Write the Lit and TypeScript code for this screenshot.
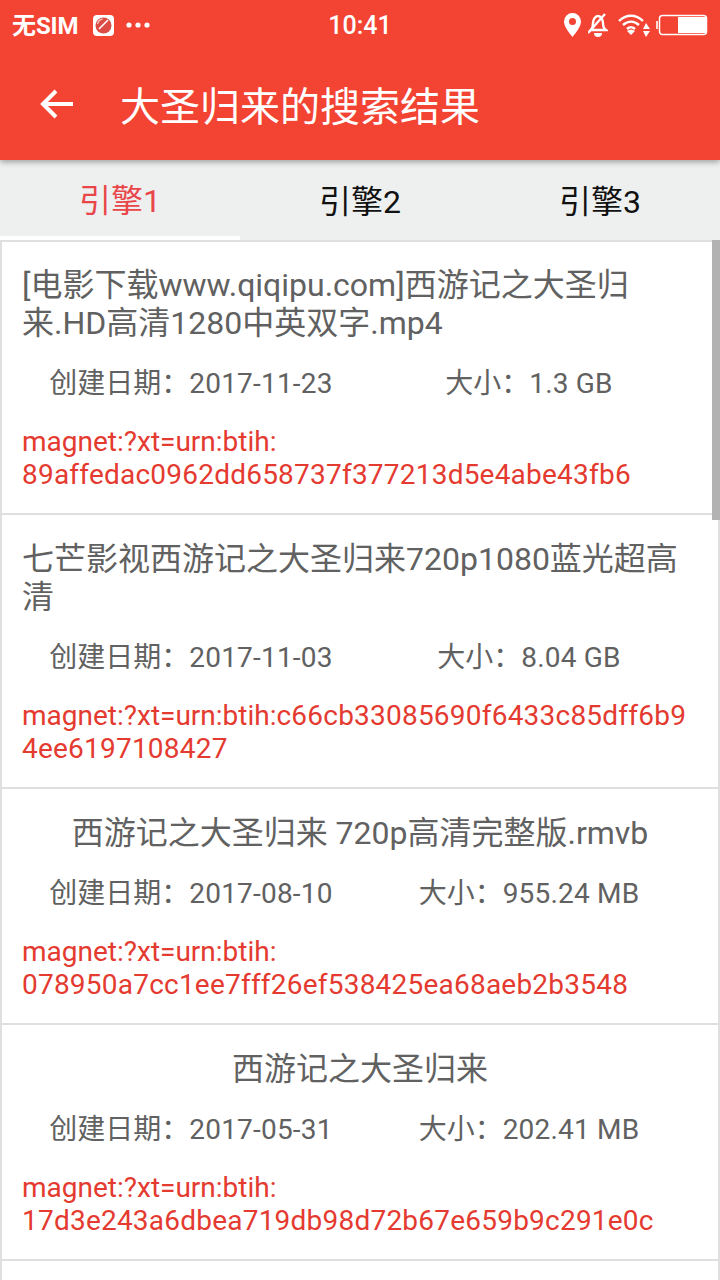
import { LitElement, html, css } from "lit";
import { customElement } from "lit/decorators.js";

const items = [
  { t: ["[电影下载www.qiqipu.com]西游记之大圣归", "来.HD高清1280中英双字.mp4"], d: "2017-11-23", s: "1.3 GB", h: ["89affedac0962dd658737f377213d5e4abe43fb6"], br: true },
  { t: ["七芒影视西游记之大圣归来720p1080蓝光超高", "清"], d: "2017-11-03", s: "8.04 GB", h: ["c66cb33085690f6433c85dff6b9", "4ee6197108427"], br: false },
  { t: ["西游记之大圣归来 720p高清完整版.rmvb"], d: "2017-08-10", s: "955.24 MB", h: ["078950a7cc1ee7fff26ef538425ea68aeb2b3548"], br: true, c: true },
  { t: ["西游记之大圣归来"], d: "2017-05-31", s: "202.41 MB", h: ["17d3e243a6dbea719db98d72b67e659b9c291e0c"], br: true, c: true },
];

@customElement("app-root")
export class AppRoot extends LitElement {
  static styles = css`
    :host { display: block; width: 720px; height: 1280px; overflow: hidden; position: relative; background: #fff;
      font-family: Roboto, "Noto Sans CJK SC", sans-serif; }
    .head { background: #f34333; height: 160px; color: #fff; position: relative; z-index: 2; box-shadow: 0 2px 6px rgba(0,0,0,.35); }
    .status { height: 50px; display: flex; align-items: center; padding: 0 12px; font-size: 24px; font-weight: 500; position: relative; }
    .left, .right { display: flex; align-items: center; }
    .sim { font-weight: 700; font-size: 24px; letter-spacing: -0.1px; margin-bottom: 4px; }
    .app-ic { margin-left: 15px; display: block; }
    .dots { margin-left: 12px; display: block; }
    .time { position: absolute; left: 0; right: 0; text-align: center; font-size: 25px; }
    .right { margin-left: auto; }
    .right svg { display: block; }
    .pin { margin-right: 7px; }
    .bell { margin-right: 10px; }
    .wifi { margin-right: 6px; }
    .bar { height: 110px; display: flex; align-items: center; padding-bottom: 2px; box-sizing: border-box; }
    .back { margin-left: 38px; display: block; }
    .title { margin-left: 46px; font-size: 40px; font-weight: 400; font-family: "Noto Sans CJK SC", sans-serif; }
    .tabs { display: flex; height: 80px; background: #eef0ef; }
    .tab { flex: 1; display: flex; align-items: center; justify-content: center; font-size: 32px; color: #111; box-sizing: border-box; padding-bottom: 2px; }
    .tab.on { color: #e9464a; border-bottom: 4px solid #fff; padding-bottom: 0; }
    .list { position: relative; }
    .item { border: 2px solid #dfdfdf; border-bottom: 0; padding: 25px 20px 22px; background: #fff; }
    .item:first-child { padding-top: 24px; }
    .name { font-size: 32px; line-height: 38px; color: #616161; white-space: nowrap; }
    .name.c { text-align: center; }
    .meta { display: flex; margin-top: 23px; font-size: 28px; line-height: 38px; color: #616161; }
    .meta span { flex: 1; text-align: center; }
    .meta i { font-style: normal; letter-spacing: 0.2px; }
    .mag { margin-top: 22px; font-size: 28px; line-height: 33px; color: #e43a30; white-space: nowrap; }
    .mag i { font-style: normal; letter-spacing: 0.22px; }
    .thumb { position: absolute; right: 0; top: 0; width: 8px; height: 280px; background: #b2b2b2; }
  `;

  render() {
    return html`
      <div class="head">
        <div class="status">
          <div class="left">
            <span class="sim">无SIM</span>
            <svg class="app-ic" width="21" height="21" viewBox="0 0 21 21">
              <rect width="21" height="21" rx="4" fill="#fff"/>
              <circle cx="10.5" cy="10.5" r="8" fill="#dc4c44"/>
              <path d="M6 14 L15 5" stroke="#fff" stroke-width="1.6"/>
              <path d="M4.500 9a6.500 6.500 0 0 1 5-5" stroke="#f6c2bd" stroke-width="1.400" fill="none"/>
            </svg>
            <svg class="dots" width="24" height="6" viewBox="0 0 24 6">
              <circle cx="3" cy="3" r="2.6" fill="#fff"/><circle cx="12" cy="3" r="2.6" fill="#fff"/><circle cx="21" cy="3" r="2.6" fill="#fff"/>
            </svg>
          </div>
          <div class="time">10:41</div>
          <div class="right">
            <svg class="pin" width="17" height="24" viewBox="0 0 17 24">
              <path fill-rule="evenodd" fill="#fff" d="M8.500 0a8.500 8.500 0 0 1 8.500 8.500c0 5-5 11-8.500 15.500C5 19.500 0 13.500 0 8.500A8.500 8.500 0 0 1 8.500 0zm0 5a3.500 3.500 0 1 0 0 7 3.500 3.500 0 0 0 0-7z"/>
            </svg>
            <svg class="bell" width="20" height="24" viewBox="0 0 20 24">
              <path fill="none" stroke="#fff" stroke-width="2.400" d="M3 17c2-2 2-4 2-7s2-7 5-7 5 4 5 7 0 5 3 7z"/>
              <path d="M6 20h8a4 4 0 0 1-8 0z" fill="#fff"/>
              <path d="M0 20L17 1" stroke="#fff" stroke-width="2.400"/>
            </svg>
            <svg class="wifi" width="32" height="24" viewBox="0 0 32 24">
              <g fill="none" stroke="#fff" stroke-width="2.400">
                <path d="M1 8c7-7 17-7 24 0"/><path d="M5 12c5-4.500 11-4.500 16 0"/><path d="M9 16c3-2.500 5-2.500 8 0"/>
              </g>
              <path d="M13 22l-4-4c2.500-2 5.500-2 8 0z" fill="#fff"/>
              <path d="M28 10l4 6h-7zM28 24l-3-6h7z" fill="#fff"/>
            </svg>
            <svg width="52" height="22" viewBox="0 0 52 22">
              <rect x="0" y="7" width="2" height="8" fill="#fff" opacity=".8"/>
              <rect x="3.500" y="1.500" width="47" height="19" rx="3" fill="none" stroke="#fff" stroke-width="1.500"/>
              <rect x="22" y="3" width="28" height="16" fill="#fff"/>
            </svg>
          </div>
        </div>
        <div class="bar">
          <svg class="back" width="36" height="32" viewBox="0 0 36 32">
            <path d="M18 3L5 16l13 13M5 16h30" fill="none" stroke="#fff" stroke-width="4"/>
          </svg>
          <div class="title">大圣归来的搜索结果</div>
        </div>
      </div>
      <div class="tabs">
        <div class="tab on">引擎1</div>
        <div class="tab">引擎2</div>
        <div class="tab">引擎3</div>
      </div>
      <div class="list">
        ${items.map(i => html`
          <div class="item">
            <div class="name ${i.c ? "c" : ""}">${i.t.map((l, n) => html`${n ? html`<br>` : ""}${l}`)}</div>
            <div class="meta"><span>创建日期：<i>${i.d}</i></span><span>大小：<i>${i.s}</i></span></div>
            <div class="mag">magnet:?xt=urn:btih:${i.br ? html`<br>` : ""}${i.h.map((l, n) => html`${n ? html`<br>` : ""}<i>${l}</i>`)}</div>
          </div>`)}
        <div class="item"></div>
        <div class="thumb"></div>
      </div>
    `;
  }
}
